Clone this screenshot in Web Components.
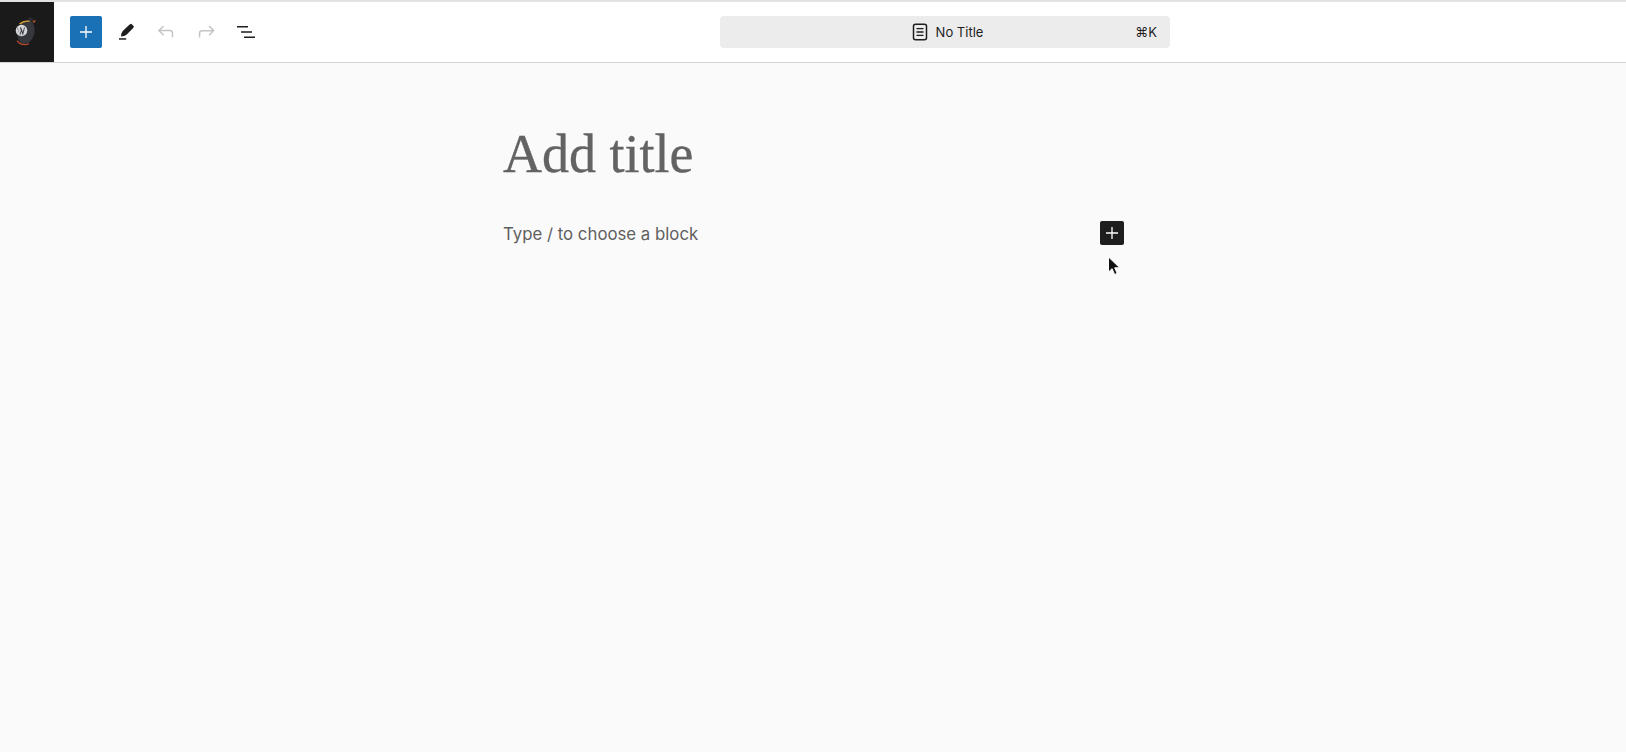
<!DOCTYPE html>
<html>
<head>
<meta charset="utf-8">
<title>No Title</title>
<style>
  html, body { margin: 0; height: 100%; }
  body { background: #fbfafa; font-family: Inter, "Liberation Sans", sans-serif; overflow: hidden; }
</style>
</head>
<body>
<editor-app>
  <editor-header slot="header">
    <site-logo slot="logo"></site-logo>
    <tool-button slot="tools" kind="primary" label="Add block">
      <svg viewBox="0 0 24 24" width="24" height="24"><path d="M11.350 6h1.300v5.350H18v1.300h-5.350V18h-1.300v-5.350H6v-1.300h5.350z" fill="#fff"/></svg>
    </tool-button>
    <tool-button slot="tools" label="Tools">
      <svg viewBox="0 0 24 24" width="24" height="24"><path d="M17.300 3.800 20 6.500l-.8 1.600-6.400 6.500c-1.500 1.300-3.500 1.800-5.800 2 .2-2.400.7-4.300 2-5.800l6.600-6.300z" fill="#1e1e1e"/><path d="M5 18.200h7.200v1.500H5z" fill="#1e1e1e"/></svg>
    </tool-button>
    <tool-button slot="tools" label="Undo">
      <svg viewBox="0 0 24 24" width="24" height="24"><path d="M18.300 11.700c-.6-.6-1.400-.9-2.300-.9H6.700l3.400-3.300-1-1.100-5.300 5.200 5.300 5.200 1-1.100-3.400-3.400H16c.5 0 .9.200 1.200.5.300.3.500.8.500 1.400v4.100h1.500v-4.100c0-1-.3-1.900-.9-2.500z" fill="#c4c4c4" transform="translate(0 -1)"/></svg>
    </tool-button>
    <tool-button slot="tools" label="Redo">
      <svg viewBox="0 0 24 24" width="24" height="24"><path d="M15.600 6.500l-1.100 1 3.400 3.400H8c-.9 0-1.700.3-2.300.9-.6.6-.9 1.500-.9 2.500v4.100h1.500v-4.100c0-.6.200-1.100.5-1.400.3-.3.700-.5 1.200-.5h9.900l-3.400 3.400 1.100 1 5.200-5.200z" fill="#c4c4c4" transform="translate(0 -1)"/></svg>
    </tool-button>
    <tool-button slot="tools" label="Document Overview">
      <svg viewBox="0 0 24 24" width="24" height="24"><path d="M3 6h11v1.500H3zM7 11.250h11v1.500H7zM10 16.500h11V18H10z" fill="#1e1e1e"/></svg>
    </tool-button>
    <command-bar slot="center" shortcut="⌘K">No Title</command-bar>
  </editor-header>
  <editor-canvas slot="canvas">
    <title-placeholder>Add title</title-placeholder>
    <block-appender>Type / to choose a block</block-appender>
  </editor-canvas>
</editor-app>

<script>
class EditorApp extends HTMLElement {
  constructor() {
    super();
    this.attachShadow({ mode: 'open' }).innerHTML = `
      <style>
        :host { display: flex; flex-direction: column; height: 752px; }
        .top { flex: none; }
        .main { flex: 1; min-height: 0; }
      </style>
      <div class="top"><slot name="header"></slot></div>
      <div class="main"><slot name="canvas"></slot></div>`;
  }
}

class EditorHeader extends HTMLElement {
  constructor() {
    super();
    this.attachShadow({ mode: 'open' }).innerHTML = `
      <style>
        :host {
          display: grid;
          grid-template-columns: 720px 450px 1fr;
          align-items: center;
          height: 60px;
          background: #fff;
          border-top: 2px solid #e2e2e2;
          border-bottom: 1px solid #d4d4d6;
        }
        .left { display: flex; align-items: center; height: 100%; }
        .tools { display: flex; align-items: center; gap: 8px; margin-left: 16px; }
      </style>
      <div class="left">
        <slot name="logo"></slot>
        <div class="tools"><slot name="tools"></slot></div>
      </div>
      <slot name="center"></slot>`;
  }
}

class SiteLogo extends HTMLElement {
  constructor() {
    super();
    this.attachShadow({ mode: 'open' }).innerHTML = `
      <style>
        :host { display: flex; align-items: center; justify-content: center; width: 54px; height: 100%; background: #1a1a1a; }
        svg { display: block; margin-right: 2px; }
      </style>
      <svg viewBox="0 0 24 32" width="24" height="32">
        <ellipse cx="12" cy="16" rx="8.500" ry="12" transform="rotate(14 12 16)" fill="#37383d"/>
        <path d="M14 2.500l2-1.500 1.500 1 2 .3-1 2.700-3-.5z" fill="#2c2d30"/>
        <path d="M5 7.500C8 5 11.500 4 15.500 4.500l.3 1.400C12 5.500 9 6.500 6.500 8.500z" fill="#cf9a33"/>
        <path d="M18.500 5l3.500-1-2 3.300z" fill="#c4552e"/>
        <path d="M2.500 25c2 3 5 4.500 9 4.300 1.500-.2 2.800-.6 3.800-1.300l-.5-1c-1 .6-2.200.9-3.500 1-3.500.1-6-1.300-8-3.700z" fill="#b94a2b"/>
        <circle cx="7.500" cy="14.500" r="5.800" fill="#d4d4d6"/>
        <path d="M3.600 11.500l2.100 6.800 1.200-3.700-1-3.100h1.300l1.600 4.800 1.200-4.800h.9l-2 7.900-1.500-3.900-1.300 3.900-3-7.900z" fill="#33343a"/>
      </svg>`;
  }
}

class ToolButton extends HTMLElement {
  constructor() {
    super();
    this.attachShadow({ mode: 'open' }).innerHTML = `
      <style>
        :host { display: flex; align-items: center; justify-content: center; width: 32px; height: 32px; border-radius: 2px; }
        :host([kind="primary"]) { background: #1a71b5; }
        ::slotted(svg) { display: block; }
      </style>
      <slot></slot>`;
  }
  connectedCallback() {
    this.setAttribute('aria-label', this.getAttribute('label') || '');
  }
}

class CommandBar extends HTMLElement {
  constructor() {
    super();
    const shortcut = this.getAttribute('shortcut') || '';
    this.attachShadow({ mode: 'open' }).innerHTML = `
      <style>
        :host {
          display: grid;
          grid-template-columns: 1fr auto 1fr;
          align-items: center;
          height: 32px;
          padding: 0 13px 0 14px;
          background: #ececed;
          border-radius: 4px;
          font: 13px Inter, "Liberation Sans", sans-serif;
          color: #1e1e1e;
        }
        .title { grid-column: 2; display: flex; align-items: center; gap: 4px; }
        .key { justify-self: end; font-size: 13px; }
        svg { display: block; }
      </style>
      <div class="title">
        <svg viewBox="0 0 24 24" width="24" height="24"><rect x="5.500" y="4.250" width="13" height="15.500" rx="2" fill="none" stroke="#1e1e1e" stroke-width="1.500"/><path d="M8.500 8h7v1.300h-7zM8.500 11.350h7v1.300h-7zM8.500 14.700h7V16h-7z" fill="#1e1e1e"/></svg>
        <span><slot></slot></span>
      </div>
      <span class="key">${shortcut}</span>`;
  }
}

class EditorCanvas extends HTMLElement {
  constructor() {
    super();
    this.attachShadow({ mode: 'open' }).innerHTML = `
      <style>
        :host { display: flex; flex-direction: column; width: 621px; margin-left: calc(50% - 310px); padding-top: 56px; }
      </style>
      <slot></slot>`;
  }
}

class TitlePlaceholder extends HTMLElement {
  constructor() {
    super();
    this.attachShadow({ mode: 'open' }).innerHTML = `
      <style>
        :host { display: block; font: 54px/70px "Liberation Serif", serif; color: #636363; -webkit-text-stroke: .35px #636363; }
      </style>
      <slot></slot>`;
  }
}

class BlockAppender extends HTMLElement {
  constructor() {
    super();
    this.attachShadow({ mode: 'open' }).innerHTML = `
      <style>
        :host { display: flex; align-items: center; justify-content: space-between; margin-top: 32px; height: 24px; font: 16.800px/24px Inter, "Liberation Sans", sans-serif; color: #5f5f5f; position: relative; }
        .add { display: flex; align-items: center; justify-content: center; width: 24px; height: 24px; border-radius: 2px; background: #1e1e1e; }
        .text { position: relative; top: 1px; }
        .cursor { position: absolute; left: 604px; top: 35px; }
        svg { display: block; }
      </style>
      <span class="text"><slot></slot></span>
      <div class="add"><svg viewBox="0 0 24 24" width="24" height="24"><path d="M11.350 6h1.300v5.350H18v1.300h-5.350V18h-1.300v-5.350H6v-1.300h5.350z" fill="#fff"/></svg></div>
      <svg class="cursor" viewBox="0 0 14 20" width="14" height="20"><path d="M1.500 1v15l3.600-3.300 2.500 5.800 2.600-1.100-2.500-5.600h5z" fill="#111" stroke="#fff" stroke-width="1"/></svg>`;
  }
}

customElements.define('editor-app', EditorApp);
customElements.define('editor-header', EditorHeader);
customElements.define('site-logo', SiteLogo);
customElements.define('tool-button', ToolButton);
customElements.define('command-bar', CommandBar);
customElements.define('editor-canvas', EditorCanvas);
customElements.define('title-placeholder', TitlePlaceholder);
customElements.define('block-appender', BlockAppender);
</script>
</body>
</html>
